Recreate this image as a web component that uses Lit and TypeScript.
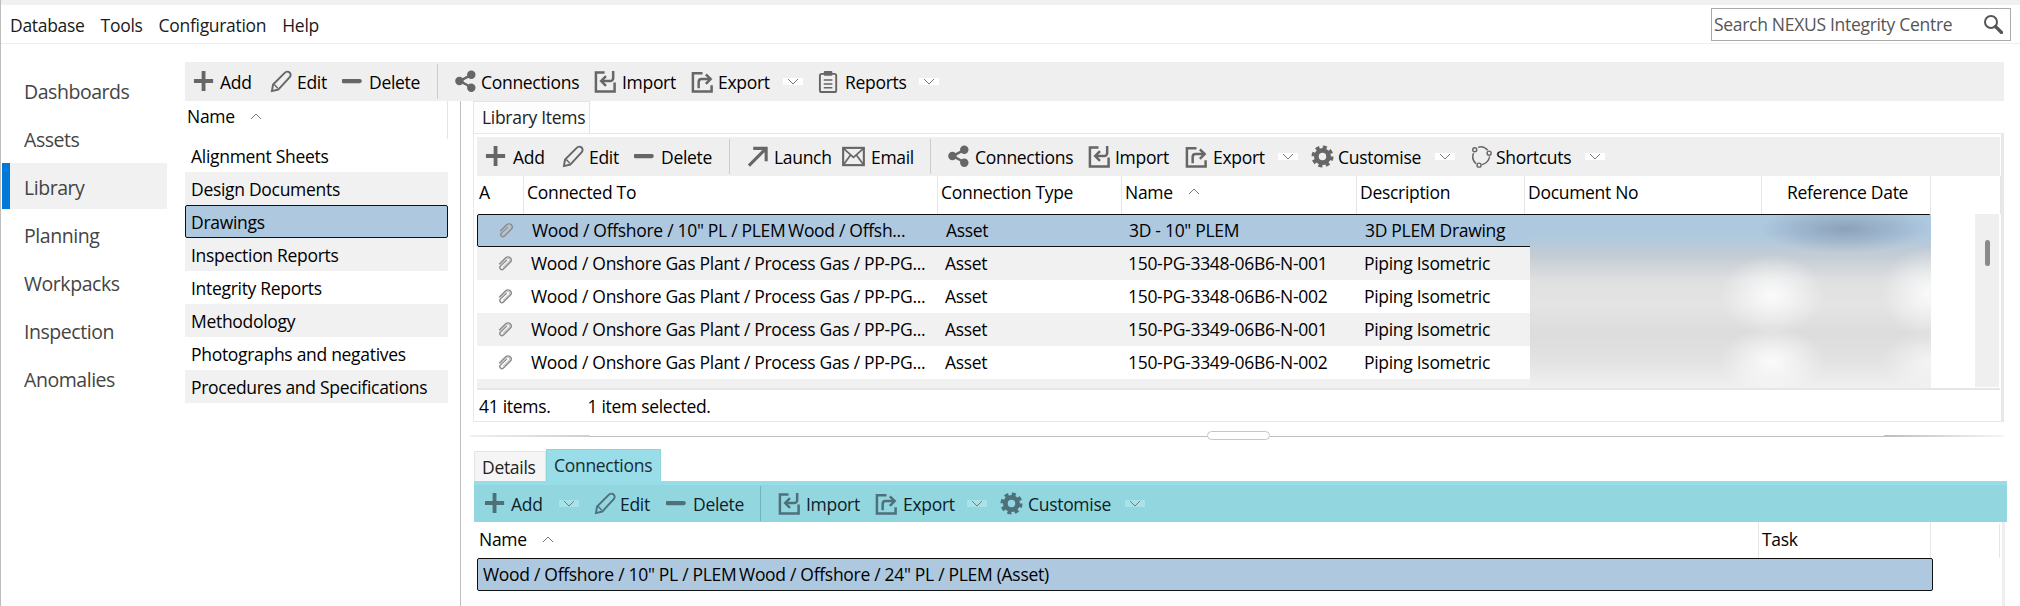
import { LitElement, html, css, svg } from "lit";
import { customElement } from "lit/decorators.js";

const ICONS: Record<string, any> = {
  add: svg`<path d="M11 1v21M1 11.5h20" stroke-width="4"/>`,
  edit: svg`<path d="M2 22l1.2-6.8L15.6 2.8a3.3 3.3 0 0 1 5 4.6L8.6 20.4z" stroke-width="2"/><path d="M4.5 15.2l3.6 3.8" stroke-width="1.5"/>`,
  del: svg`<path d="M1.5 11.5h17" stroke-width="4.4" stroke-linecap="round"/>`,
  share: svg`<path d="M17 5L5 11.5 17 18" stroke-width="2.6"/><circle cx="17" cy="5" r="4.4" fill="currentColor" stroke="none"/><circle cx="4.6" cy="11.5" r="4.4" fill="currentColor" stroke="none"/><circle cx="17" cy="18.5" r="4.4" fill="currentColor" stroke="none"/>`,
  import: svg`<path d="M11 2.5H2v20h19.5V13" stroke-width="2.6"/><path d="M20 1v7.5a3 3 0 0 1-3 3H8" stroke-width="2.6"/><path d="M12.5 6.5l-5 5 5 5" stroke-width="2.6"/>`,
  export: svg`<path d="M12 3.5H2v19h19.5V16" stroke-width="2.6"/><path d="M8 19v-6.5a3 3 0 0 1 3-3h9" stroke-width="2.6"/><path d="M15.5 4.5l5 5-5 5" stroke-width="2.6"/>`,
  reports: svg`<rect x="2" y="4" width="17" height="19" rx="2" stroke-width="2"/><rect x="6" y="1" width="9" height="5" rx="1" fill="currentColor" stroke="none"/><path d="M6 10.5h9M6 14.5h9M6 18.5h9" stroke-width="1.6"/>`,
  launch: svg`<path d="M2 21.5L19 4.5M6.5 3.5h13.5v13.5" stroke-width="3.2"/>`,
  email: svg`<rect x="1.2" y="3" width="21.6" height="18" stroke-width="2.2"/><path d="M1.5 3.5L12 13 22.5 3.5M1.5 20.5L9 10.5M22.5 20.5L15 10.5" stroke-width="1.8"/>`,
  gear: svg`<circle cx="12" cy="12" r="6.4" stroke-width="5"/><circle cx="12" cy="12" r="9.8" stroke-width="3.4" stroke-dasharray="4.2 3.5"/>`,
  shortcuts: svg`<circle cx="6" cy="5" r="2.1" stroke-width="1.5"/><circle cx="21" cy="8.5" r="2.1" stroke-width="1.5"/><circle cx="10.5" cy="21" r="2.1" stroke-width="1.5"/><path d="M9.5 2.5Q15 .5 19.5 5.5M21.5 12Q20.5 18.5 13.5 20.5M7.5 19.5Q2 15 4.8 8.5" stroke-width="1.5"/>`,
};

type Tool = { i?: string; t?: string; w?: number; x?: number; sep?: boolean; chev?: boolean };

const LEFT: Tool[] = [
  { i: "add", t: "Add", w: 77 },
  { i: "edit", t: "Edit", w: 72 },
  { i: "del", t: "Delete", w: 95 },
  { sep: true },
  { i: "share", t: "Connections", w: 139, x: 26 },
  { i: "import", t: "Import", w: 97, x: 28 },
  { i: "export", t: "Export", w: 92 },
  { chev: true, w: 35 },
  { i: "reports", t: "Reports", w: 101 },
  { chev: true, w: 20 },
];
const LIB: Tool[] = [
  { i: "add", t: "Add", w: 77, x: 28 },
  { i: "edit", t: "Edit", w: 72 },
  { i: "del", t: "Delete", w: 95 },
  { sep: true },
  { i: "launch", t: "Launch", w: 95 },
  { i: "email", t: "Email", w: 88, x: 29 },
  { sep: true },
  { i: "share", t: "Connections", w: 140 },
  { i: "import", t: "Import", w: 97 },
  { i: "export", t: "Export", w: 93, x: 28 },
  { chev: true, w: 33 },
  { i: "gear", t: "Customise", w: 124 },
  { chev: true, w: 34 },
  { i: "shortcuts", t: "Shortcuts", w: 116 },
  { chev: true, w: 20 },
];
const LOWER: Tool[] = [
  { i: "add", t: "Add", w: 75 },
  { chev: true, w: 35 },
  { i: "edit", t: "Edit", w: 72, x: 26 },
  { i: "del", t: "Delete", w: 94 },
  { sep: true },
  { i: "import", t: "Import", w: 97, x: 28 },
  { i: "export", t: "Export", w: 92, x: 28 },
  { chev: true, w: 33 },
  { i: "gear", t: "Customise", w: 125, x: 28 },
  { chev: true, w: 20 },
];

const NAV = ["Dashboards", "Assets", "Library", "Planning", "Workpacks", "Inspection", "Anomalies"];
const LISTS = [
  "Alignment Sheets",
  "Design Documents",
  "Drawings",
  "Inspection Reports",
  "Integrity Reports",
  "Methodology",
  "Photographs and negatives",
  "Procedures and Specifications",
];
const ONSHORE = "Wood / Onshore Gas Plant / Process Gas / PP-PG...";
const ROWS = [
  ['Wood / Offshore / 10" PL / PLEM\u2009Wood / Offsh...', "Asset", '3D - 10" PLEM', "3D PLEM Drawing"],
  [ONSHORE, "Asset", "150-PG-3348-06B6-N-001", "Piping Isometric"],
  [ONSHORE, "Asset", "150-PG-3348-06B6-N-002", "Piping Isometric"],
  [ONSHORE, "Asset", "150-PG-3349-06B6-N-001", "Piping Isometric"],
  [ONSHORE, "Asset", "150-PG-3349-06B6-N-002", "Piping Isometric"],
];

const chevron = (up = false) => html`<svg class="chevsvg" width="12" height="7" viewBox="0 0 12 7"><path d="${up ? "M1 6l5-5 5 5" : "M1 1l5 5 5-5"}" fill="none" stroke="currentColor" stroke-width="1"/></svg>`;

const clip = html`<svg class="clip" width="18" height="18" viewBox="0 0 18 18"><g transform="rotate(45 9 9)" fill="none"><path d="M5.8 14V4.8a3.2 3.2 0 0 1 6.4 0v9.6a2.1 2.1 0 0 1-4.2 0V5.6" stroke="#8a8a8a" stroke-width="1.4"/><path d="M7.2 14V4.8a1.8 1.8 0 0 1 3.6 0v8.6" stroke="#bcbcbc" stroke-width="1"/></g></svg>`;

@customElement("app-root")
export class AppRoot extends LitElement {
  static styles = css`
    :host {
      display: block;
      width: 2020px;
      height: 606px;
      overflow: hidden;
      background: #fff;
      color: #000;
      font-family: "Open Sans", "Noto Sans", sans-serif;
      font-size: 17.5px;
      letter-spacing: -0.3px;
      border-left: 1px solid #bdbdbd;
      box-sizing: border-box;
    }
    .strip { height: 5px; background: #f0f0f0; margin-left: -1px; }
    .menubar {
      height: 38px;
      border-bottom: 1px solid #eeeeee;
      display: flex;
      align-items: center;
      justify-content: space-between;
      padding: 0 9px;
    }
    .menu { display: flex; gap: 16px; color: #1a1a1a; padding-top: 2px; }
    .search {
      width: 300px;
      height: 33px;
      box-sizing: border-box;
      border: 1px solid #aaaaaa;
      display: flex;
      align-items: center;
      justify-content: space-between;
      padding: 0 7px 0 2px;
      color: #555;
      margin-top: 0;
    }
    .body { display: grid; grid-template-columns: 184px 1fr; padding-top: 18px; }
    .nav { padding: 5px 0 0 1px; }
    .navitem {
      height: 46px;
      margin-bottom: 2px;
      width: 165px;
      box-sizing: border-box;
      padding: 3px 0 0 22px;
      display: flex;
      align-items: center;
      font-size: 19.5px;
      letter-spacing: -0.45px;
      color: #444;
    }
    .navitem.active { background: #f1f1f1; border-left: 8px solid #0078d7; padding-left: 14px; }
    .main { width: 1819px; }
    .toolbar {
      display: flex;
      align-items: center;
      height: 39px;
      background: #efefef;
      color: #000;
      box-sizing: border-box;
    }
    .toolbar.t-left { padding-left: 8px; }
    .toolbar.t-lib { padding-left: 8px; width: 1523px; }
    .toolbar.t-lower {
      padding-left: 10px;
      width: 1533px;
      height: 41px;
      background: #92d7df;
      border-top: 4px solid #96dde8;
      color: #10202a;
    }
    .tool { display: flex; align-items: center; height: 100%; flex: none; white-space: nowrap; }
    .icon { flex: none; display: flex; align-items: center; color: #666; }
    .t-lower .icon { color: #4e7079; }
    .icon svg { fill: none; stroke: currentColor; }
    .sep { width: 1px; height: 35px; background: #cbcbcb; margin-right: 17px; flex: none; }
    .t-lower .sep { background: #6fb4bd; }
    .chev {
      flex: none;
      display: flex;
      align-items: center;
    }
    .chevbox {
      width: 20px;
      height: 7px;
      background: #fff;
      color: #666;
      display: flex;
      align-items: center;
      justify-content: center;
    }
    .t-lower .chevbox { background: #a9e3ea; color: #38626b; }
    .split { display: grid; grid-template-columns: 263px 12px 1fr; height: 505px; }
    .list { width: 263px; }
    .listhead {
      height: 38px;
      box-sizing: border-box;
      border-right: 1px solid #e4e4e4;
      padding: 0 0 8px 2px;
      display: flex;
      align-items: center;
      gap: 15px;
    }
    .chevsvg { color: #777; flex: none; }
    .li {
      height: 33px;
      box-sizing: border-box;
      display: flex;
      align-items: center;
      padding: 0 6px;
    }
    .li.alt { background: #f1f1f1; }
    .li.sel { background: #adc8df; border: 1px solid #111; border-radius: 2px; padding: 0 5px; }
    .gap { background: #fff; }
    .right {
      border-left: 1px solid #bdbdbd;
      padding-left: 12px;
    }
    .tabs { display: flex; align-items: flex-end; }
    .tab {
      box-sizing: border-box;
      padding: 0 0 1px 8px;
      height: 32px;
      width: 117px;
      display: flex;
      align-items: center;
      white-space: nowrap;
      border: 1px solid #e4e4e4;
      border-bottom: 0;
      background: #fdfdfd;
      color: #222;
    }
    .panel {
      width: 1531px;
      height: 289px;
      box-sizing: border-box;
      border: 1px solid #e8e8e8;
      border-right-width: 3px;
      padding: 3px 1px 0 3px;
      position: relative;
    }
    .thead { display: grid; height: 38px; position: relative; }
    .thead.lib { grid-template-columns: 47px 414px 184px 235px 168px 237px 169px; }
    .thead.lib .th { padding-bottom: 7px; }
    .thead.low { grid-template-columns: 1283px 172px; margin-left: 2px; height: 36px; }
    .th {
      display: flex;
      align-items: center;
      gap: 15px;
      padding: 0 0 2px 3px;
      border-right: 1px solid #e6e6e6;
      box-sizing: border-box;
      white-space: nowrap;
    }
    .thead.lib .th.center { padding-left: 25px; }
    .thead.lib .th.first { padding-left: 2px; }
    .rows { height: 174px; position: relative; border-bottom: 2px solid #e6e6e6; width: 1523px; box-sizing: content-box; }
    .row {
      width: 1454px;
      height: 33px;
      box-sizing: border-box;
      display: grid;
      grid-template-columns: 47px 414px 184px 235px 168px;
      align-items: center;
      white-space: nowrap;
    }
    .row.alt { background: #f1f1f1; }
    .row.sel { background: #adc8df; border: 1px solid #111; border-radius: 2px; }
    .row > div { padding-bottom: 1px; }
    .row > .c-clip { display: flex; justify-content: center; padding: 0 5px 2px 14px; }
    .c-t { padding-left: 7px; }
    .c-a { padding-left: 7px; }
    .c-n { padding-left: 6px; }
    .c-d { padding-left: 7px; }
    .partial { height: 9px; width: 1454px; background: #f1f1f1; }
    .blur {
      position: absolute;
      left: 1053px;
      top: 1px;
      width: 401px;
      height: 173px;
      background:
        radial-gradient(ellipse 52px 40px at 242px 80px, rgba(255, 255, 255, 0.85), rgba(255, 255, 255, 0) 100%),
        radial-gradient(ellipse 52px 34px at 242px 146px, rgba(255, 255, 255, 0.85), rgba(255, 255, 255, 0) 100%),
        radial-gradient(ellipse 46px 46px at 398px 78px, rgba(255, 255, 255, 0.8), rgba(255, 255, 255, 0) 100%),
        radial-gradient(ellipse 46px 30px at 398px 146px, rgba(255, 255, 255, 0.6), rgba(255, 255, 255, 0) 100%),
        radial-gradient(ellipse 85px 24px at 315px 14px, rgba(125, 145, 170, 0.7), rgba(125, 145, 170, 0) 100%),
        linear-gradient(to bottom, #adc8df 0, #adc8df 18px, #c3ccd4 40px, #dfe0e0 66px, #e4e4e4 90px, #dcdcdc 118px, #e2e2e2 145px, #f0f0f0 172px);
    }
    .track { position: absolute; left: 1498px; top: 0; width: 24px; height: 173px; background: #efefef; }
    .thumb { position: absolute; left: 10px; top: 26px; width: 5px; height: 26px; border-radius: 3px; background: #8a8a8a; }
    .status { height: 31px; display: flex; align-items: center; gap: 37px; padding: 0 0 1px 2px; }
    .splitter { margin: 14px 0 12px -3px; height: 1px; background: #bdbdbd; width: 1534px; position: relative; }
    .splitter::before {
      content: "";
      position: absolute;
      left: 0;
      top: -1px;
      width: 120px;
      height: 2px;
      background: linear-gradient(to right, #f0f0f0, #cfcfcf);
    }
    .splitter::after {
      content: "";
      position: absolute;
      right: 0;
      top: -1px;
      width: 120px;
      height: 2px;
      background: linear-gradient(to right, #bdbdbd, #f6f6f6);
    }
    .grip {
      position: absolute;
      left: 737px;
      top: -5px;
      width: 63px;
      height: 9px;
      box-sizing: border-box;
      border: 1px solid #c6c6c6;
      border-radius: 5px;
      background: #fff;
    }
    .tabs.low { margin-left: 1px; }
    .tab.det { width: 72px; height: 30px; background: #f5f5f5; padding: 0 0 0 7px; }
    .tab.con { width: 115px; height: 32px; background: #98dde8; border-color: #8fd3dc; padding: 0 0 2px 7px; color: #1a2b33; }
    .lower { position: relative; margin-left: 1px; height: 125px; }
    .lowbody { border-right: 3px solid #eeeeee; width: 1528px; height: 84px; position: relative; }
    .lowrow {
      margin-left: 3px;
      width: 1456px;
      height: 33px;
      box-sizing: border-box;
      background: #adc8df;
      border: 1px solid #111;
      border-radius: 2px;
      display: flex;
      align-items: center;
      padding: 0 0 1px 5px;
      white-space: nowrap;
    }
    .edge { position: absolute; left: 1523px; top: 2px; width: 1px; height: 34px; background: #e6e6e6; }
    .thead.lib .edge { top: 0; height: 38px; }
  `;

  private tools(items: Tool[]) {
    return items.map((it) => {
      if (it.sep) return html`<div class="sep"></div>`;
      if (it.chev) return html`<div class="chev" style="width:${it.w}px"><div class="chevbox">${chevron()}</div></div>`;
      return html`<div class="tool" style="width:${it.w}px">
        <span class="icon" style="width:${it.x ?? 27}px"><svg width="23" height="23" viewBox="0 0 24 24">${ICONS[it.i!]}</svg></span>${it.t}
      </div>`;
    });
  }

  render() {
    return html`
      <div class="strip"></div>
      <div class="menubar">
        <div class="menu"><span>Database</span><span>Tools</span><span>Configuration</span><span>Help</span></div>
        <div class="search">
          <span>Search NEXUS Integrity Centre</span>
          <svg width="20" height="20" viewBox="0 0 20 20" fill="none"><circle cx="8" cy="8" r="6" stroke="#555" stroke-width="2"/><path d="M12.5 12.5l6 6" stroke="#555" stroke-width="3.2" stroke-linecap="round"/></svg>
        </div>
      </div>
      <div class="body">
        <nav class="nav">
          ${NAV.map((n) => html`<div class="navitem ${n === "Library" ? "active" : ""}">${n}</div>`)}
        </nav>
        <div class="main">
          <div class="toolbar t-left">${this.tools(LEFT)}</div>
          <div class="split">
            <div class="list">
              <div class="listhead">Name ${chevron(true)}</div>
              ${LISTS.map((l, i) => html`<div class="li ${l === "Drawings" ? "sel" : i % 2 ? "alt" : ""}">${l}</div>`)}
            </div>
            <div class="gap"></div>
            <div class="right">
              <div class="tabs"><div class="tab">Library Items</div></div>
              <div class="panel">
                <div class="toolbar t-lib">${this.tools(LIB)}</div>
                <div class="thead lib">
                  <div class="th first">A</div>
                  <div class="th">Connected To</div>
                  <div class="th">Connection Type</div>
                  <div class="th">Name ${chevron(true)}</div>
                  <div class="th">Description</div>
                  <div class="th">Document No</div>
                  <div class="th center">Reference Date</div>
                  <div class="edge"></div>
                </div>
                <div class="rows">
                  ${ROWS.map(
                    (r, i) => html`<div class="row ${i === 0 ? "sel" : i % 2 ? "alt" : ""}">
                      <div class="c-clip">${clip}</div>
                      <div class="c-t">${r[0]}</div>
                      <div class="c-a">${r[1]}</div>
                      <div class="c-n">${r[2]}</div>
                      <div class="c-d">${r[3]}</div>
                    </div>`
                  )}
                  <div class="partial"></div>
                  <div class="blur"></div>
                  <div class="track"><div class="thumb"></div></div>
                </div>
                <div class="status"><span>41 items.</span><span>1 item selected.</span></div>
              </div>
              <div class="splitter"><div class="grip"></div></div>
              <div class="tabs low"><div class="tab det">Details</div><div class="tab con">Connections</div></div>
              <div class="lower">
                <div class="toolbar t-lower">${this.tools(LOWER)}</div>
                <div class="lowbody">
                  <div class="thead low">
                    <div class="th">Name ${chevron(true)}</div>
                    <div class="th">Task</div>
                    <div class="edge"></div>
                  </div>
                  <div class="lowrow">Wood / Offshore / 10" PL / PLEM\u2009Wood / Offshore / 24" PL / PLEM (Asset)</div>
                </div>
              </div>
            </div>
          </div>
        </div>
      </div>
    `;
  }
}
